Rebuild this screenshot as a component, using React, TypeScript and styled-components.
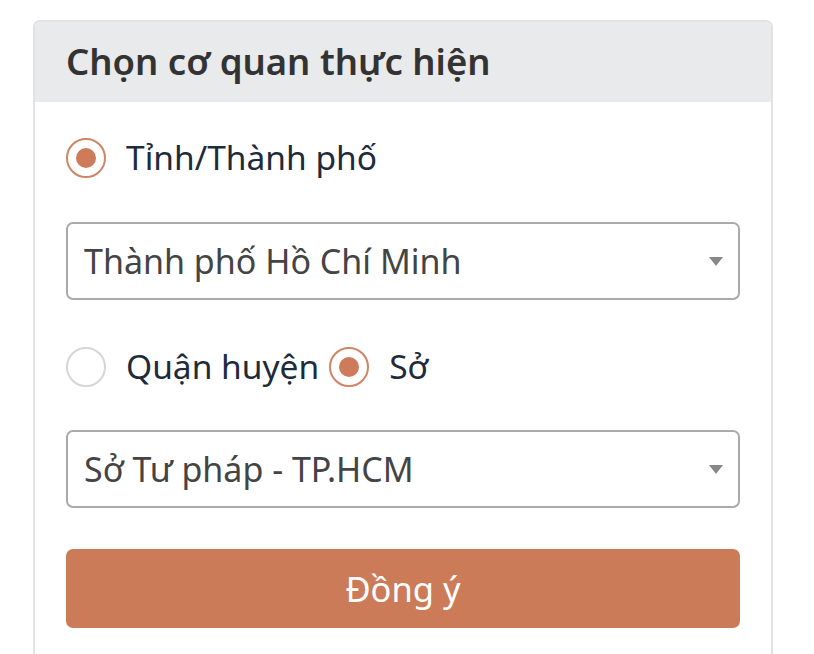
import React, { useState } from 'react'
import styled, { createGlobalStyle } from 'styled-components'

const GlobalStyle = createGlobalStyle`
    html, body {
        margin: 0;
        padding: 0;
        background: #ffffff;
    }
    body {
        font-family: 'Noto Sans', 'Open Sans', sans-serif;
    }
`

type Level = 'district' | 'department'

const App: React.FC = () => {
    const [level, setLevel] = useState<Level>('department')

    return (
        <React.Fragment>
            <GlobalStyle />
            <Page>
                <Card>
                    <CardHeader>
                        <Title>Chọn cơ quan thực hiện</Title>
                    </CardHeader>
                    <CardBody>
                        <RadioRow $top={36}>
                            <RadioOption>
                                <RadioCircle checked={true} />
                                <RadioLabel>Tỉnh/Thành phố</RadioLabel>
                            </RadioOption>
                        </RadioRow>

                        <SelectBox $top={44}>
                            <SelectText>Thành phố Hồ Chí Minh</SelectText>
                            <Caret />
                        </SelectBox>

                        <RadioRow $top={47}>
                            <RadioOption onClick={() => setLevel('district')}>
                                <RadioCircle checked={level === 'district'} />
                                <RadioLabel>Quận huyện</RadioLabel>
                            </RadioOption>
                            <RadioOption onClick={() => setLevel('department')}>
                                <RadioCircle checked={level === 'department'} />
                                <RadioLabel>Sở</RadioLabel>
                            </RadioOption>
                        </RadioRow>

                        <SelectBox $top={43}>
                            <SelectText>Sở Tư pháp - TP.HCM</SelectText>
                            <Caret />
                        </SelectBox>

                        <SubmitButton type="button">Đồng ý</SubmitButton>
                    </CardBody>
                </Card>
            </Page>
        </React.Fragment>
    )
}

export default App

interface IRadioCircle {
    checked: boolean
}

interface ISpacing {
    $top: number
}

const Page = styled.div`
    height: 654px;
    overflow: hidden;
    padding: 20px 0 0 33px;
    box-sizing: border-box;
`

const Card = styled.div`
    width: 740px;
    height: 700px;
    border: 2px solid #e2e2e2;
    border-radius: 7px;
    box-sizing: border-box;
    overflow: hidden;
    background: #ffffff;
`

const CardHeader = styled.div`
    height: 80px;
    background-color: #e9eaeb;
    display: flex;
    align-items: center;
    padding-left: 31px;
`

const Title = styled.h1`
    margin: 0 0 2px 0;
    font-size: 36.5px;
    font-weight: 600;
    color: #333333;
`

const CardBody = styled.div`
    display: flex;
    flex-direction: column;
    padding: 0 31px;
`

const RadioRow = styled.div<ISpacing>`
    display: flex;
    align-items: center;
    gap: 10px;
    height: 40px;
    margin-top: ${(props) => props.$top}px;
`

const RadioOption = styled.label`
    display: flex;
    align-items: center;
    gap: 20px;
    cursor: pointer;
`

const RadioCircle = styled.span<IRadioCircle>`
    width: 40px;
    height: 40px;
    box-sizing: border-box;
    border-radius: 50%;
    border: 2px solid ${(props) => (props.checked ? '#d08564' : '#d6d6d6')};
    display: flex;
    align-items: center;
    justify-content: center;
    background: #ffffff;

    &::after {
        content: '';
        width: 20px;
        height: 20px;
        border-radius: 50%;
        background: ${(props) => (props.checked ? '#cd7b5a' : 'transparent')};
    }
`

const RadioLabel = styled.span`
    font-size: 33.5px;
    color: #1d2b3a;
    line-height: 40px;
    margin-top: -2px;
`

const SelectBox = styled.div<ISpacing>`
    height: 78px;
    box-sizing: border-box;
    border: 2px solid #aaaaaa;
    border-radius: 7px;
    display: flex;
    align-items: center;
    justify-content: space-between;
    padding: 0 15px 0 16px;
    margin-top: ${(props) => props.$top}px;
    cursor: pointer;
`

const SelectText = styled.span`
    font-size: 34px;
    color: #444444;
`

const Caret = styled.span`
    width: 0;
    height: 0;
    border-left: 7px solid transparent;
    border-right: 7px solid transparent;
    border-top: 9px solid #888888;
`

const SubmitButton = styled.button`
    height: 79px;
    margin-top: 41px;
    border: none;
    border-radius: 7px;
    background-color: #cc7b59;
    color: #ffffff;
    font-family: 'Noto Sans', 'Open Sans', sans-serif;
    font-size: 34.5px;
    cursor: pointer;
`
